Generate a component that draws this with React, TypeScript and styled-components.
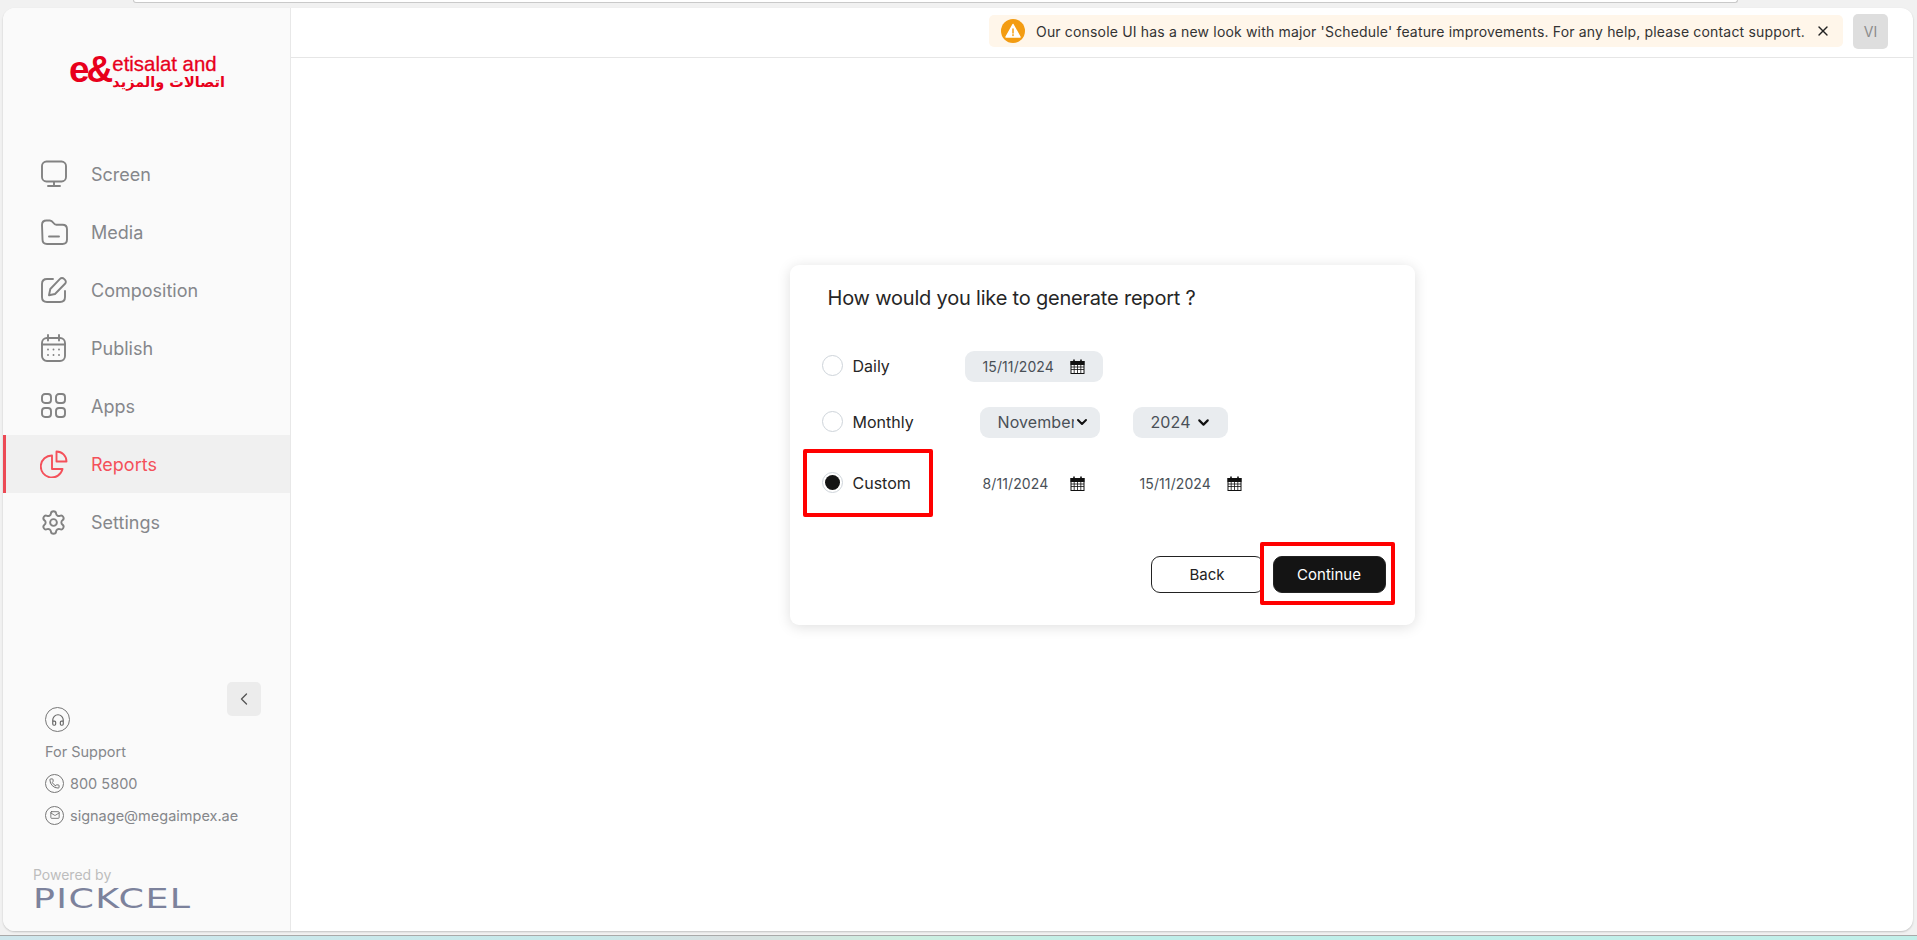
import React from 'react';
import styled, { createGlobalStyle } from 'styled-components';
import { ChevronDown, ChevronLeft, Headphones, Mail, Phone, Settings, X } from 'lucide-react';

const GlobalStyle = createGlobalStyle`
  html, body {
    margin: 0;
    padding: 0;
    background: #f1f1f1;
    font-family: Inter, "Noto Sans", sans-serif;
    overflow: hidden;
  }
  * { box-sizing: border-box; }
`;

const Shell = styled.div`
  width: 1917px;
  height: 940px;
  display: flex;
  flex-direction: column;
`;

const ChromeTop = styled.div`
  height: 8px;
  padding-left: 133px;
`;

const Omnibox = styled.div`
  width: 1605px;
  height: 3px;
  background: #fff;
  border: 1px solid #c9c9c9;
  border-top: none;
  border-radius: 0 0 8px 8px;
`;

const Window = styled.div`
  height: 923px;
  margin: 0 4px 0 3px;
  display: flex;
  background: #fff;
  border-radius: 12px;
  overflow: hidden;
  box-shadow: 0 1px 2px rgba(0, 0, 0, 0.2);
`;

const ChromeBottom = styled.div`
  height: 9px;
  padding-top: 4px;
`;

const Taskbar = styled.div`
  height: 5px;
  border-top: 1px solid #a9a9a9;
  background: linear-gradient(90deg, #cfe6ec 0%, #c6e9ea 30%, #d8dfe0 38%, #cdeee0 47%, #bfeee9 60%, #c2efe9 100%);
`;

const Sidebar = styled.aside`
  width: 288px;
  flex: none;
  display: flex;
  flex-direction: column;
  background: #fafafa;
  border-right: 1px solid #e8e8e8;
`;

const LogoBlock = styled.div`
  height: 125px;
  padding: 47px 0 0 66px;
  display: flex;
  gap: 2px;
`;

const LogoMark = styled.div`
  font-family: "Liberation Sans", sans-serif;
  font-weight: 700;
  font-size: 37px;
  line-height: 30px;
  letter-spacing: -3px;
  color: #e8001c;
`;

const LogoWords = styled.div`
  display: flex;
  flex-direction: column;
  color: #e8001c;
`;

const LogoEn = styled.div`
  font-family: "Liberation Sans", sans-serif;
  font-size: 20.4px;
  line-height: 19px;
  white-space: nowrap;
  -webkit-text-stroke: 0.3px #e8001c;
`;

const LogoAr = styled.div`
  font-family: "DejaVu Sans", sans-serif;
  font-size: 14.5px;
  font-weight: 700;
  line-height: 16px;
  direction: rtl;
  text-align: right;
  white-space: nowrap;
`;

const Nav = styled.nav`
  display: flex;
  flex-direction: column;
  padding-top: 12px;
`;

const NavRow = styled.div<{ $active?: boolean }>`
  height: 58px;
  display: flex;
  align-items: center;
  padding-left: ${(p) => (p.$active ? 34 : 37)}px;
  border-left: ${(p) => (p.$active ? '3px solid #ec4a55' : 'none')};
  background: ${(p) => (p.$active ? '#f0f0f0' : 'transparent')};
  color: ${(p) => (p.$active ? '#f4505a' : '#85878b')};
  font-size: 18px;
  font-weight: 400;
`;

const NavIcon = styled.span`
  width: 51px;
  flex: none;
  display: flex;
  color: #828282;
`;

const ActiveIcon = styled(NavIcon)`
  color: #f4505a;
`;

const SidebarSpacer = styled.div`
  flex: 1;
`;

const CollapseRow = styled.div`
  display: flex;
  justify-content: flex-end;
  padding-right: 29px;
  height: 25px;
`;

const CollapseButton = styled.button`
  width: 34px;
  height: 34px;
  border: none;
  padding: 0;
  border-radius: 5px;
  background: #ececec;
  color: #555;
  display: flex;
  align-items: center;
  justify-content: center;
`;

const Support = styled.div`
  padding-left: 42px;
  display: flex;
  flex-direction: column;
  color: #85878b;
  font-size: 14.5px;
`;

const SupportBadge = styled.div<{ $size: number }>`
  width: ${(p) => p.$size}px;
  height: ${(p) => p.$size}px;
  flex: none;
  border: 1px solid #777;
  border-radius: 50%;
  color: #666;
  display: flex;
  align-items: center;
  justify-content: center;
`;

const SupportTitle = styled.div`
  height: 32px;
  margin-top: 3px;
  display: flex;
  align-items: center;
`;

const SupportLine = styled.div`
  height: 32px;
  display: flex;
  align-items: center;
  gap: 6px;
`;

const Powered = styled.div`
  padding: 35px 0 20px 30px;
`;

const PoweredLabel = styled.div`
  font-size: 14px;
  line-height: 18px;
  color: #bdbdbd;
`;

const PickcelMark = styled.div`
  margin-top: 4px;
  width: 161px;
  font-family: "DejaVu Sans", sans-serif;
  font-weight: 400;
  font-size: 26px;
  line-height: 23px;
  color: #7c829c;
  letter-spacing: 1px;
  white-space: nowrap;
  transform: scaleX(1.4);
  transform-origin: left center;
`;

const Main = styled.main`
  flex: 1;
  min-width: 0;
  display: flex;
  flex-direction: column;
`;

const TopBar = styled.header`
  height: 50px;
  flex: none;
  display: flex;
  align-items: center;
  justify-content: flex-end;
  gap: 10px;
  padding: 0 25px 3px 0;
  border-bottom: 1px solid #e6e6e6;
`;

const Banner = styled.div`
  width: 854px;
  height: 32px;
  display: flex;
  align-items: center;
  padding-left: 12px;
  background: #fff6ea;
  border-radius: 5px;
  color: #333;
  font-size: 14px;
  letter-spacing: 0.17px;
  white-space: nowrap;
`;

const WarnDot = styled.span`
  width: 24px;
  height: 24px;
  flex: none;
  margin-right: 11px;
  border-radius: 50%;
  background: #f39c12;
  display: flex;
  align-items: center;
  justify-content: center;
`;

const BannerClose = styled.span`
  margin-left: 10px;
  display: flex;
  color: #222;
`;

const Avatar = styled.div`
  width: 35px;
  height: 35px;
  border-radius: 5px;
  background: #dedede;
  color: #8c8c8c;
  font-size: 14px;
  display: flex;
  align-items: center;
  justify-content: center;
`;

const Stage = styled.div`
  flex: 1;
  display: flex;
  justify-content: center;
  padding-top: 207px;
`;

const Card = styled.section`
  position: relative;
  width: 625px;
  height: 360px;
  padding: 19px 0 0 32px;
  background: #fff;
  border-radius: 9px;
  box-shadow: 0 2px 14px rgba(0, 0, 0, 0.13);
`;

const Title = styled.h2`
  margin: 0 0 38px 6px;
  font-size: 20px;
  line-height: 28px;
  font-weight: 400;
  letter-spacing: -0.2px;
  color: #262626;
`;

const OptionRow = styled.div<{ $gap: number }>`
  height: 32px;
  margin-bottom: ${(p) => p.$gap}px;
  display: flex;
  align-items: center;
`;

const RadioLabel = styled.label<{ $width: number }>`
  width: ${(p) => p.$width}px;
  flex: none;
  display: flex;
  align-items: center;
  gap: 10px;
  font-size: 16px;
  font-weight: 400;
  color: #262626;
`;

const Radio = styled.span<{ $checked?: boolean }>`
  width: 21px;
  height: 21px;
  margin-top: -2px;
  border: 1px solid #ced4da;
  border-radius: 50%;
  background: #fff;
  display: flex;
  align-items: center;
  justify-content: center;

  &::after {
    content: '';
    display: ${(p) => (p.$checked ? 'block' : 'none')};
    width: 15px;
    height: 15px;
    border-radius: 50%;
    background: #141414;
  }
`;

const Field = styled.div<{ $filled?: boolean; $width: number }>`
  width: ${(p) => p.$width}px;
  height: 31px;
  flex: none;
  display: flex;
  align-items: center;
  padding-left: 18px;
  border-radius: 9px;
  background: ${(p) => (p.$filled ? '#e9ecef' : 'transparent')};
  color: #495057;
  font-size: 14px;
  letter-spacing: 0.1px;
  white-space: nowrap;
`;

const FieldGap = styled.div<{ $width: number }>`
  width: ${(p) => p.$width}px;
  flex: none;
`;

const FieldText = styled.span<{ $width: number }>`
  width: ${(p) => p.$width}px;
  flex: none;
`;

const SelectPill = styled(Field)`
  font-size: 16px;
  color: #495057;
`;

// sits over the end of a long month name, as the native select arrow does
const SelectChevron = styled.span<{ $offset: number }>`
  margin-left: ${(p) => p.$offset}px;
  display: flex;
  color: #111;
  background: #e9ecef;
`;

const Actions = styled.div`
  display: flex;
  gap: 9px;
  margin-top: 57px;
  padding-left: 329px;
`;

const ActionButton = styled.button<{ $primary?: boolean }>`
  width: 113px;
  height: 37px;
  border-radius: 9px;
  border: 1px solid #222;
  background: ${(p) => (p.$primary ? '#141414' : '#fff')};
  color: ${(p) => (p.$primary ? '#fff' : '#222')};
  font-family: inherit;
  font-size: 15px;
  font-weight: 400;
`;

// red markup boxes somebody drew on top of the screenshot
const Markup = styled.div<{ $x: number; $y: number; $w: number; $h: number }>`
  position: absolute;
  left: ${(p) => p.$x}px;
  top: ${(p) => p.$y}px;
  width: ${(p) => p.$w}px;
  height: ${(p) => p.$h}px;
  border: 4px solid #ff0000;
  border-radius: 2px;
  pointer-events: none;
`;

const stroke = {
  fill: 'none',
  stroke: 'currentColor',
  strokeWidth: 1.9,
  strokeLinecap: 'round' as const,
  strokeLinejoin: 'round' as const,
};

const ScreenIcon = () => (
  <svg width="28" height="28" viewBox="0 0 28 28" {...stroke}>
    <rect x="2" y="1.5" width="24" height="20" rx="4.5" />
    <path d="M14 22v4M8 26h12" />
  </svg>
);

const MediaIcon = () => (
  <svg width="28" height="28" viewBox="0 0 28 28" {...stroke}>
    <path d="M2 7c0-3 1.5-4.5 4.5-4.5h3.4c1.6 0 2.4.8 3.4 2.2.9 1.3 1.5 2 3 2h6.2c3 0 4.5 1.8 4.5 4.5v10.3c0 3-1.8 4.5-4.5 4.5h-15.5c-3 0-4.500-1.500-4.500-4.500z" />
    <path d="M9 18.500h10" />
  </svg>
);

const CompositionIcon = () => (
  <svg width="28" height="28" viewBox="0 0 28 28" {...stroke}>
    <path d="M13 3H7C4 3 2 5 2 8v13c0 3 2 5 5 5h13c3 0 5-2 5-5v-6" />
    <path d="M20 2.800a2.800 2.800 0 0 1 4 0l1 1a2.800 2.800 0 0 1 0 4L15 18l-6 1.300L10.300 13z" />
  </svg>
);

const PublishIcon = () => (
  <svg width="28" height="28" viewBox="0 0 28 28" {...stroke}>
    <rect x="2" y="4" width="23" height="23" rx="5" />
    <path d="M2 10.500h23M8 1v5.500M19 1v5.500" />
    <path d="M8 15.500h.01M13.500 15.500h.01M19 15.500h.01M8 21h.01M13.500 21h.01M19 21h.01" />
  </svg>
);

const AppsIcon = () => (
  <svg width="28" height="28" viewBox="0 0 28 28" {...stroke}>
    <rect x="2" y="2" width="9" height="9" rx="3" />
    <rect x="16" y="2" width="9" height="9" rx="3" />
    <rect x="2" y="16" width="9" height="9" rx="3" />
    <rect x="16" y="16" width="9" height="9" rx="3" />
  </svg>
);

const ReportsIcon = () => (
  <svg width="28" height="28" viewBox="0 0 28 28" {...stroke}>
    <path d="M12 5.500a11 11 0 1 0 10.500 13.500H12z" />
    <path d="M16.500 1.500a10 10 0 0 1 10 10h-10z" />
  </svg>
);

const WarningGlyph = () => (
  <svg width="16" height="16" viewBox="0 0 16 16">
    <path d="M8 1.500 15 14H1z" fill="#fff" stroke="#fff" strokeWidth="1.500" strokeLinejoin="round" />
    <path d="M8 6v4M8 11.800v.6" stroke="#f39c12" strokeWidth="1.500" strokeLinecap="round" />
  </svg>
);

const CalendarGlyph = () => (
  <svg width="15" height="15" viewBox="0 0 15 15" fill="none" stroke="#111" strokeWidth="1">
    <rect x="1" y="2.500" width="13" height="12" fill="#fff" />
    <rect x="1" y="2.500" width="13" height="3" fill="#111" />
    <path d="M1 8h13M1 10.500h13M4.200 5.500v9M7.500 5.500v9M10.800 5.500v9" strokeWidth="0.8" />
    <path d="M4 .5v3M11 .5v3" strokeWidth="1.600" />
  </svg>
);

const navItems = [
  { label: 'Screen', icon: <ScreenIcon /> },
  { label: 'Media', icon: <MediaIcon /> },
  { label: 'Composition', icon: <CompositionIcon /> },
  { label: 'Publish', icon: <PublishIcon /> },
  { label: 'Apps', icon: <AppsIcon /> },
  { label: 'Reports', icon: <ReportsIcon />, active: true },
  { label: 'Settings', icon: <Settings size={27} strokeWidth={1.7} /> },
];

export default function App() {
  return (
    <Shell>
      <GlobalStyle />
      <ChromeTop>
        <Omnibox />
      </ChromeTop>
      <Window>
        <Sidebar>
          <LogoBlock>
            <LogoMark>e&amp;</LogoMark>
            <LogoWords>
              <LogoEn>etisalat and</LogoEn>
              <LogoAr>اتصالات والمزيد</LogoAr>
            </LogoWords>
          </LogoBlock>
          <Nav>
            {navItems.map((item) => (
              <NavRow key={item.label} $active={item.active}>
                {item.active ? <ActiveIcon>{item.icon}</ActiveIcon> : <NavIcon>{item.icon}</NavIcon>}
                {item.label}
              </NavRow>
            ))}
          </Nav>
          <SidebarSpacer />
          <CollapseRow>
            <CollapseButton>
              <ChevronLeft size={20} strokeWidth={1.6} />
            </CollapseButton>
          </CollapseRow>
          <Support>
            <SupportBadge $size={25}>
              <Headphones size={14} />
            </SupportBadge>
            <SupportTitle>For Support</SupportTitle>
            <SupportLine>
              <SupportBadge $size={19}>
                <Phone size={11} />
              </SupportBadge>
              800 5800
            </SupportLine>
            <SupportLine>
              <SupportBadge $size={19}>
                <Mail size={10} />
              </SupportBadge>
              signage@megaimpex.ae
            </SupportLine>
          </Support>
          <Powered>
            <PoweredLabel>Powered by</PoweredLabel>
            <PickcelMark>PICKCEL</PickcelMark>
          </Powered>
        </Sidebar>
        <Main>
          <TopBar>
            <Banner>
              <WarnDot>
                <WarningGlyph />
              </WarnDot>
              Our console UI has a new look with major 'Schedule' feature improvements. For any help, please contact support.
              <BannerClose>
                <X size={16} strokeWidth={2} />
              </BannerClose>
            </Banner>
            <Avatar>VI</Avatar>
          </TopBar>
          <Stage>
            <Card>
              <Title>How would you like to generate report ?</Title>
              <OptionRow $gap={24}>
                <RadioLabel $width={143}>
                  <Radio />
                  Daily
                </RadioLabel>
                <Field $filled $width={138}>
                  <FieldText $width={87}>15/11/2024</FieldText>
                  <CalendarGlyph />
                </Field>
              </OptionRow>
              <OptionRow $gap={29}>
                <RadioLabel $width={158}>
                  <Radio />
                  Monthly
                </RadioLabel>
                <SelectPill $filled $width={120}>
                  <FieldText $width={76}>November</FieldText>
                  <SelectChevron $offset={0}>
                    <ChevronDown size={16} strokeWidth={3} />
                  </SelectChevron>
                </SelectPill>
                <FieldGap $width={33} />
                <SelectPill $filled $width={95}>
                  <FieldText $width={38}>2024</FieldText>
                  <SelectChevron $offset={6}>
                    <ChevronDown size={17} strokeWidth={3} />
                  </SelectChevron>
                </SelectPill>
              </OptionRow>
              <OptionRow $gap={0}>
                <RadioLabel $width={143}>
                  <Radio $checked />
                  Custom
                </RadioLabel>
                <Field $width={157}>
                  <FieldText $width={87}>8/11/2024</FieldText>
                  <CalendarGlyph />
                </Field>
                <Field $width={157}>
                  <FieldText $width={87}>15/11/2024</FieldText>
                  <CalendarGlyph />
                </Field>
              </OptionRow>
              <Actions>
                <ActionButton>Back</ActionButton>
                <ActionButton $primary>Continue</ActionButton>
              </Actions>
              <Markup $x={13} $y={184} $w={130} $h={68} />
              <Markup $x={470} $y={277} $w={135} $h={63} />
            </Card>
          </Stage>
        </Main>
      </Window>
      <ChromeBottom>
        <Taskbar />
      </ChromeBottom>
    </Shell>
  );
}
